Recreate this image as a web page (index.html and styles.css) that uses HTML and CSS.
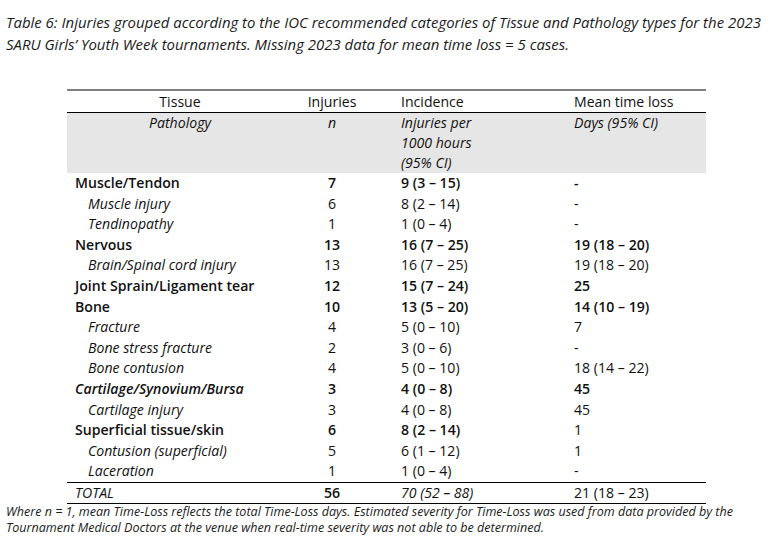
FILE: index.html
```html
<!DOCTYPE html>
<html>
<head>
<meta charset="utf-8">
<link rel="stylesheet" href="styles.css">
</head>
<body>
<p class="caption">Table 6: Injuries grouped according to the IOC recommended categories of Tissue and Pathology types for the 2023 SARU Girls’ Youth Week tournaments. Missing 2023 data for mean time loss = 5 cases.</p>
<table class="inj">
  <colgroup>
    <col class="c1"><col class="c2"><col class="c3"><col class="c4">
  </colgroup>
  <thead>
    <tr class="hd">
      <th class="t-center">Tissue</th>
      <th class="t-center">Injuries</th>
      <th class="t-inc">Incidence</th>
      <th class="t-mean">Mean time loss</th>
    </tr>
    <tr class="sub">
      <td class="t-center">Pathology</td>
      <td class="t-center">n</td>
      <td class="t-inc">Injuries per<br>1000 hours<br>(95% CI)</td>
      <td class="t-mean">Days (95% CI)</td>
    </tr>
  </thead>
  <tbody>
    <tr class="cat"><td class="name">Muscle/Tendon</td><td class="num">7</td><td class="t-inc">9 (3 – 15)</td><td class="t-mean">-</td></tr>
    <tr class="path"><td class="name">Muscle injury</td><td class="num">6</td><td class="t-inc">8 (2 – 14)</td><td class="t-mean">-</td></tr>
    <tr class="path"><td class="name">Tendinopathy</td><td class="num">1</td><td class="t-inc">1 (0 – 4)</td><td class="t-mean">-</td></tr>
    <tr class="cat"><td class="name">Nervous</td><td class="num">13</td><td class="t-inc">16 (7 – 25)</td><td class="t-mean">19 (18 – 20)</td></tr>
    <tr class="path"><td class="name">Brain/Spinal cord injury</td><td class="num">13</td><td class="t-inc">16 (7 – 25)</td><td class="t-mean">19 (18 – 20)</td></tr>
    <tr class="cat"><td class="name">Joint Sprain/Ligament tear</td><td class="num">12</td><td class="t-inc">15 (7 – 24)</td><td class="t-mean">25</td></tr>
    <tr class="cat"><td class="name">Bone</td><td class="num">10</td><td class="t-inc">13 (5 – 20)</td><td class="t-mean">14 (10 – 19)</td></tr>
    <tr class="path"><td class="name">Fracture</td><td class="num">4</td><td class="t-inc">5 (0 – 10)</td><td class="t-mean">7</td></tr>
    <tr class="path"><td class="name">Bone stress fracture</td><td class="num">2</td><td class="t-inc">3 (0 – 6)</td><td class="t-mean">-</td></tr>
    <tr class="path"><td class="name">Bone contusion</td><td class="num">4</td><td class="t-inc">5 (0 – 10)</td><td class="t-mean">18 (14 – 22)</td></tr>
    <tr class="cat"><td class="name ital">Cartilage/Synovium/Bursa</td><td class="num">3</td><td class="t-inc">4 (0 – 8)</td><td class="t-mean">45</td></tr>
    <tr class="path"><td class="name">Cartilage injury</td><td class="num">3</td><td class="t-inc">4 (0 – 8)</td><td class="t-mean">45</td></tr>
    <tr class="cat"><td class="name">Superficial tissue/skin</td><td class="num">6</td><td class="t-inc">8 (2 – 14)</td><td class="t-mean reg">1</td></tr>
    <tr class="path"><td class="name">Contusion (superficial)</td><td class="num">5</td><td class="t-inc">6 (1 – 12)</td><td class="t-mean">1</td></tr>
    <tr class="path"><td class="name">Laceration</td><td class="num">1</td><td class="t-inc">1 (0 – 4)</td><td class="t-mean">-</td></tr>
  </tbody>
  <tfoot>
    <tr class="total"><td class="name ital">TOTAL</td><td class="num">56</td><td class="t-inc ital">70 (52 – 88)</td><td class="t-mean">21 (18 – 23)</td></tr>
  </tfoot>
</table>
<p class="note">Where n = 1, mean Time-Loss reflects the total Time-Loss days. Estimated severity for Time-Loss was used from data provided by the Tournament Medical Doctors at the venue when real-time severity was not able to be determined.</p>
</body>
</html>
```
FILE: styles.css
```css
html, body {
  margin: 0;
  padding: 0;
  background: #fff;
}
body {
  width: 784px;
  height: 542px;
  overflow: hidden;
  font-family: "Open Sans", "Liberation Sans", sans-serif;
  color: #111;
}
.caption {
  margin: 0;
  padding: 11px 0 0 6px;
  width: 766px;
  font-size: 14.95px;
  line-height: 22px;
  font-style: italic;
  color: #1b1b1b;
}
.inj {
  margin: 34px 0 0 67px;
  width: 639px;
  border-collapse: collapse;
  table-layout: fixed;
  font-size: 14.1px;
}
.c1 { width: 226px; }
.c2 { width: 78px; }
.c3 { width: 195px; }
.c4 { width: 140px; }
.inj th, .inj td {
  padding: 0;
  text-align: left;
  vertical-align: top;
  white-space: nowrap;
}
.hd th {
  font-weight: 400;
  border-top: 2px solid #808080;
  border-bottom: 1px solid #000;
  height: 21px;
  line-height: 21px;
}
.sub td {
  background: #e6e6e6;
  font-style: italic;
  line-height: 20px;
  height: 60px;
}
.inj .t-center { text-align: center; }
.inj .t-inc { padding-left: 30px; }
.inj .t-mean { padding-left: 8px; }
.inj tbody td {
  height: 20.6px;
  line-height: 20.6px;
}
.inj .name { padding-left: 8px; }
.inj .num { text-align: center; }
.inj .cat td { font-weight: 600; }
.inj .cat td.reg { font-weight: 400; }
.inj .path td.name {
  font-style: italic;
  padding-left: 21px;
}
.inj td.ital { font-style: italic; }
.total td {
  border-top: 1px solid #000;
  border-bottom: 1px solid #000;
  height: 20px;
  line-height: 20px;
}
.inj .total td.num { font-weight: 600; }
.note {
  margin: 0;
  padding-left: 6px;
  font-size: 12.55px;
  line-height: 16px;
  font-style: italic;
  color: #1b1b1b;
  width: 770px;
}
```
